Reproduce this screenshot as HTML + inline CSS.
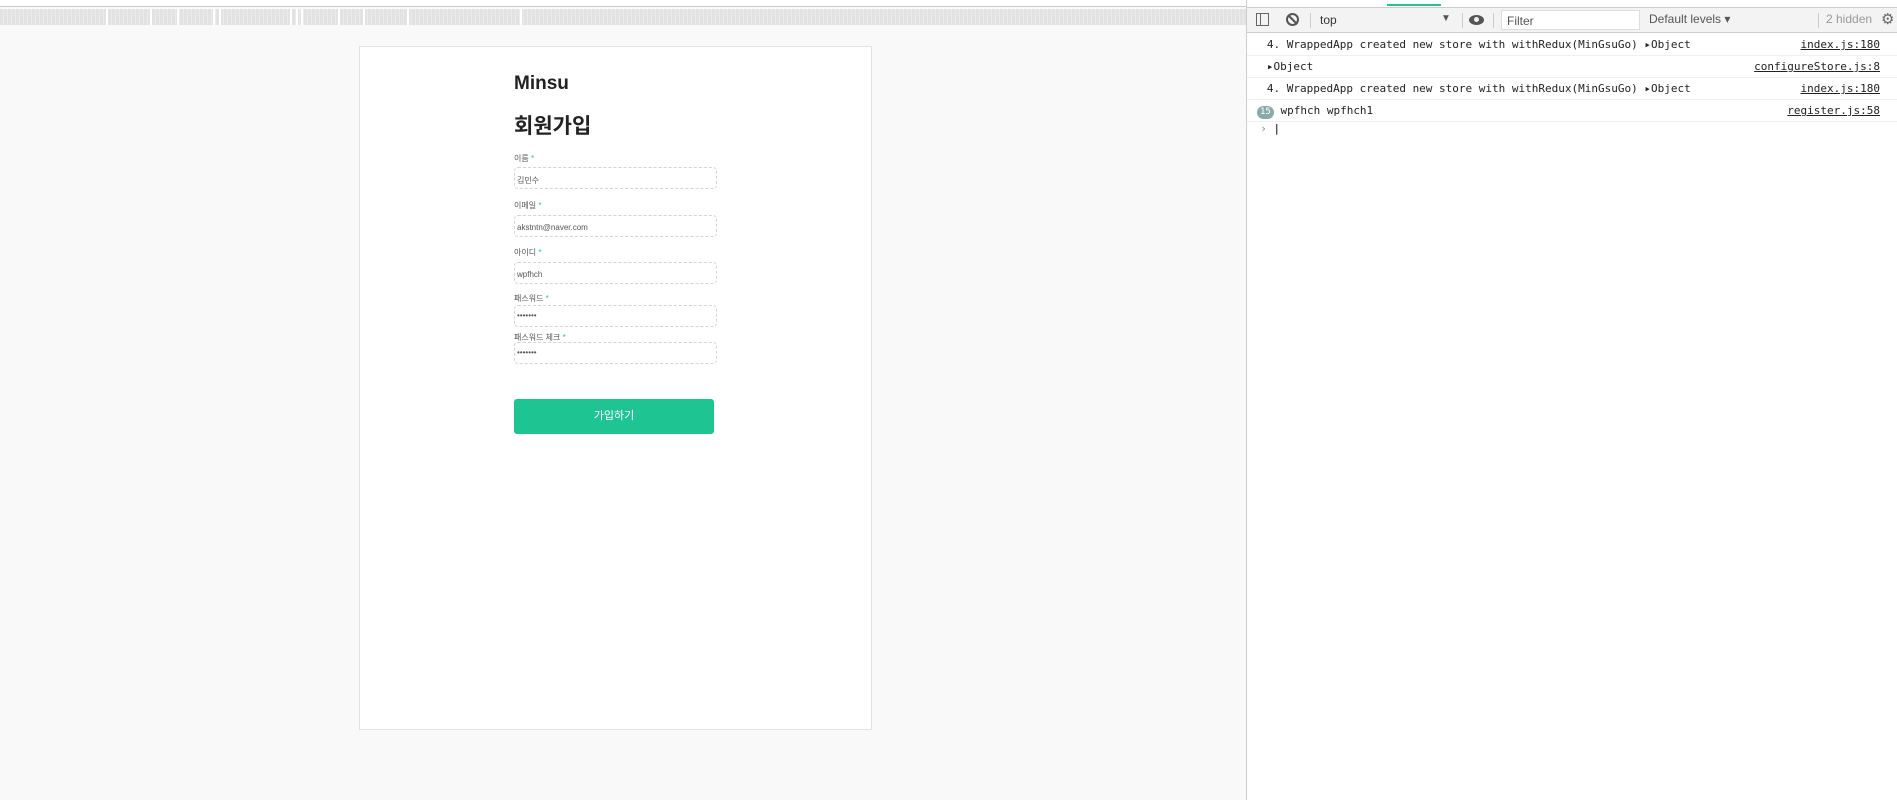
<!DOCTYPE html>
<html><head><meta charset="utf-8"><style>
*{box-sizing:border-box;margin:0;padding:0}
body{width:1897px;height:800px;position:relative;overflow:hidden;background:#f9f9f9;font-family:"Liberation Sans","Noto Sans CJK KR",sans-serif}
.topline{position:absolute;left:0;top:0;width:1246px;height:7px;background:#fff;border-bottom:1px solid #ccc}
.band{position:absolute;left:0;top:9px;width:1246px;height:16px;background:repeating-linear-gradient(90deg,#e2e2e2 0 3px,#ebebeb 3px 4px)}
.band i{position:absolute;top:0;width:2px;height:16px;background:#fff}
.card{position:absolute;left:359px;top:46px;width:513px;height:684px;background:#fff;border:1px solid #e2e2e2}
.abs{position:absolute}
.lbl{position:absolute;left:514px;font-size:8px;color:#555}
.lbl b{color:#1ec593;font-weight:normal}
.inp{position:absolute;left:514px;width:203px;height:22px;border:1px dashed #d4d4d4;border-radius:4px;font-size:8px;color:#555;padding:7px 2px}
.btn{position:absolute;left:514px;top:399px;width:200px;height:35px;background:#1ec593;border-radius:3px;color:#fff;font-size:11px;text-align:center;line-height:35px}
.dev{position:absolute;left:1246px;top:0;width:651px;height:800px;background:#fff;border-left:1px solid #ccc}
.tb{position:absolute;left:0;top:7px;width:651px;height:26px;border-top:1px solid #ccc;border-bottom:1px solid #ccc;background:#f3f3f3;font-size:12px;color:#333}
.sep{position:absolute;top:5px;width:1px;height:15px;background:#ccc}
.row{position:absolute;left:0;width:651px;height:22px;border-bottom:1px solid #f0f0f0;font-family:"DejaVu Sans Mono","Liberation Mono",monospace;font-size:11px;color:#222;line-height:22px;white-space:pre}
.row .r{position:absolute;right:18px;top:0;text-decoration:underline;color:#222}
</style></head><body>
<div class="topline"></div>
<div class="band"><i style="left:106px"></i><i style="left:150px"></i><i style="left:177px"></i><i style="left:213px"></i><i style="left:219px"></i><i style="left:290px"></i><i style="left:296px"></i><i style="left:301px"></i><i style="left:338px"></i><i style="left:363px"></i><i style="left:407px"></i><i style="left:520px"></i></div>
<div class="card"></div>
<div class="abs" style="left:514px;top:73px;font-size:19px;font-weight:bold;color:#222">Minsu</div>
<div class="abs" style="left:514px;top:110px;font-size:21px;font-weight:bold;color:#222">회원가입</div>
<div class="lbl" style="top:153px">이름 <b>*</b></div>
<div class="inp" style="top:167px">김민수</div>
<div class="lbl" style="top:200px">이메일 <b>*</b></div>
<div class="inp" style="top:215px">akstntn@naver.com</div>
<div class="lbl" style="top:247px">아이디 <b>*</b></div>
<div class="inp" style="top:262px">wpfhch</div>
<div class="lbl" style="top:293px">패스워드 <b>*</b></div>
<div class="inp" style="top:305px;padding-top:5px">•••••••</div>
<div class="lbl" style="top:332px">패스워드 체크 <b>*</b></div>
<div class="inp" style="top:342px;padding-top:5px">•••••••</div>
<div class="btn">가입하기</div>
<div class="dev">
<div class="abs" style="left:140px;top:4px;width:54px;height:2px;background:#1ec593"></div>
<div class="tb">
<div class="abs" style="left:9px;top:5px;width:13px;height:13px;border:1px solid #666"><div style="position:absolute;left:3px;top:0;width:1px;height:11px;background:#666"></div></div>
<div class="abs" style="left:39px;top:5px;width:13px;height:13px;border:2px solid #555;border-radius:50%"><div style="position:absolute;left:4px;top:-1px;width:2px;height:12px;background:#555;transform:rotate(-45deg)"></div></div>
<div class="sep" style="left:63px"></div>
<div class="abs" style="left:73px;top:5px;color:#333">top</div>
<div class="abs" style="left:194px;top:5px;font-size:10px;color:#555">▼</div>
<div class="sep" style="left:215px"></div>
<div class="abs" style="left:222px;top:7px;width:15px;height:10px;border-radius:50%;background:#555"><div style="position:absolute;left:5px;top:2px;width:5px;height:5px;border-radius:50%;background:#f3f3f3"></div></div>
<div class="sep" style="left:246px"></div>
<div class="abs" style="left:254px;top:2px;width:139px;height:20px;background:#fff;border:1px solid #ddd;padding:3px 5px;font-size:12px;color:#555">Filter</div>
<div class="abs" style="left:402px;top:4px;color:#555">Default levels ▾</div>
<div class="sep" style="left:571px"></div>
<div class="abs" style="left:579px;top:4px;color:#999">2 hidden</div>
<div class="abs" style="left:634px;top:2px;color:#666;font-size:15px">⚙</div>
</div>
<div class="row" style="top:34px">   4. WrappedApp created new store with withRedux(MinGsuGo) ▸Object<span class="r">index.js:180</span></div>
<div class="row" style="top:56px">   ▸Object<span class="r">configureStore.js:8</span></div>
<div class="row" style="top:78px">   4. WrappedApp created new store with withRedux(MinGsuGo) ▸Object<span class="r">index.js:180</span></div>
<div class="row" style="top:100px"><span style="display:inline-block;margin-left:10px;background:#8aa;color:#fff;border-radius:7px;padding:0 3px;line-height:13px;font-size:9px">15</span> wpfhch wpfhch1<span class="r">register.js:58</span></div>
<div class="row" style="top:118px;border:none;color:#888">  › <span style="color:#000">|</span></div>
</div>
</body></html>
